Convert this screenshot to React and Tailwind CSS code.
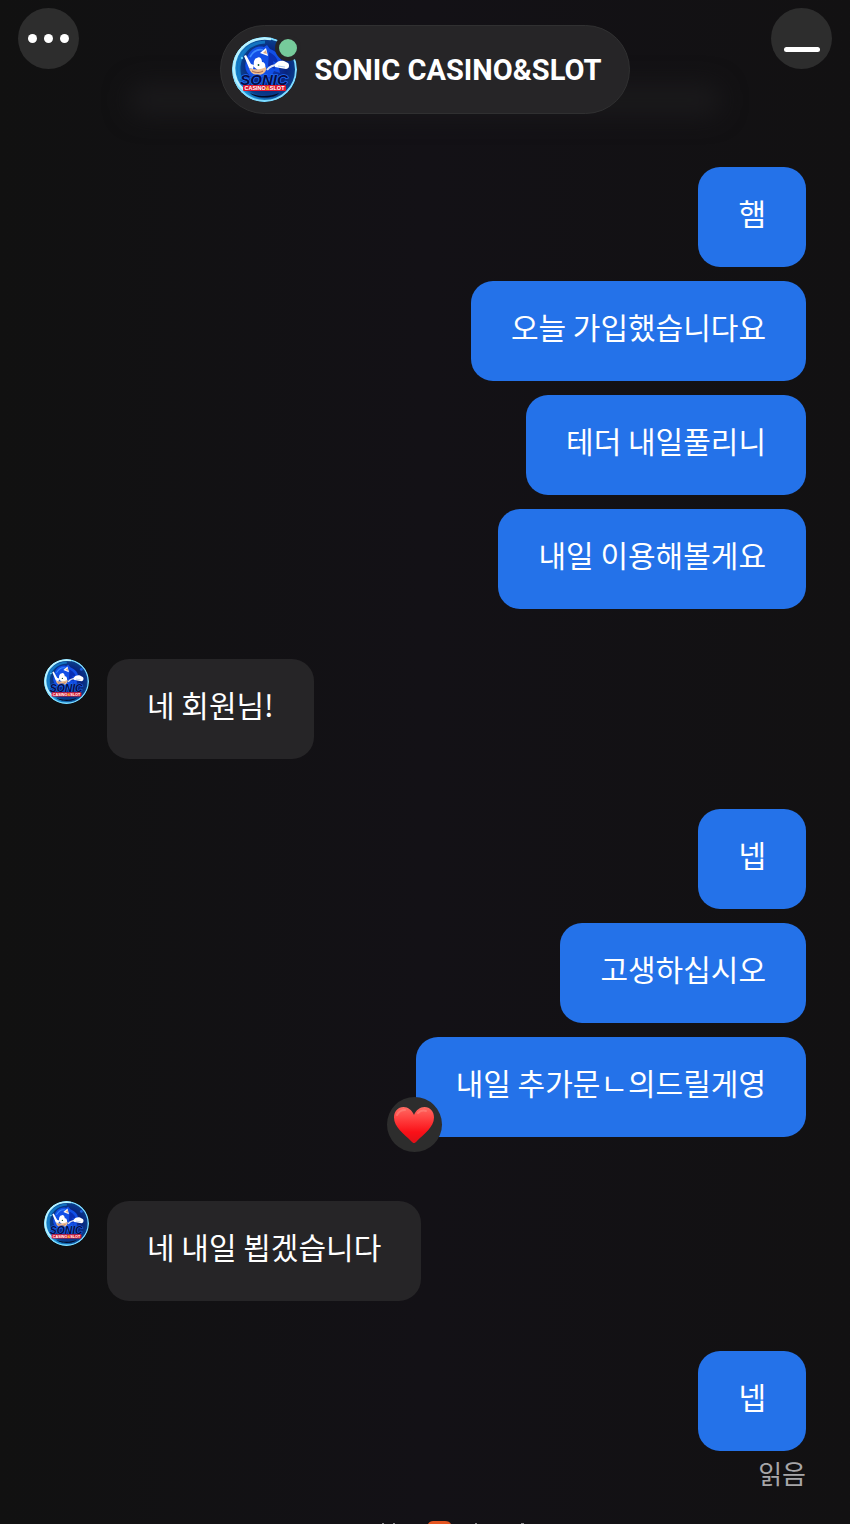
import { useId } from 'react';
import clsx from 'clsx';

const MESSAGE_GROUPS = [
  { id: 1, from: 'me', messages: [{ text: '햄' }, { text: '오늘 가입했습니다요' }, { text: '테더 내일풀리니' }, { text: '내일 이용해볼게요' }] },
  { id: 2, from: 'agent', messages: [{ text: '네 회원님!' }] },
  { id: 3, from: 'me', messages: [{ text: '넵' }, { text: '고생하십시오' }, { text: '내일 추가문ㄴ의드릴게영', liked: true }] },
  { id: 4, from: 'agent', messages: [{ text: '네 내일 뵙겠습니다' }] },
  { id: 5, from: 'me', messages: [{ text: '넵' }], read: true },
];

const Avatar = ({ className }) => {
  const id = useId();

  return (
    <svg viewBox="0 0 65 65" className={clsx('shrink-0', className)} role="img" aria-label="SONIC CASINO&SLOT">
      <defs>
        <radialGradient id={`${id}-bg`} cx="0.56" cy="0.48" r="0.56">
          <stop offset="0" stopColor="#0d3cc4" />
          <stop offset="0.5" stopColor="#08247e" />
          <stop offset="0.78" stopColor="#0a3f8c" />
          <stop offset="0.92" stopColor="#1f9be0" />
          <stop offset="1" stopColor="#b5f2ff" />
        </radialGradient>
        <clipPath id={`${id}-clip`}>
          <circle cx="32.5" cy="32.5" r="32.5" />
        </clipPath>
      </defs>
      <g clipPath={`url(#${id}-clip)`}>
        <circle cx="32.5" cy="32.5" r="32.5" fill={`url(#${id}-bg)`} />
        <circle cx="32.5" cy="32.5" r="31.5" fill="none" stroke="#7fdcff" strokeWidth="2" />
        <path d="M39 2C18-1 3 12 2 31c0 9 4 17 10 22" fill="none" stroke="#b9f2ff" strokeWidth="2.5" />
        <path d="M33 5C17 6 8 16 7 30c0 5 0 9 2 12" fill="none" stroke="#168bd9" strokeWidth="3" opacity="0.7" />
        <path d="M18 56c9 4 20 4 29 0-4 6-24 6-29 0Z" fill="#030b26" />
        <circle cx="54" cy="15" r="2" fill="#1d62df" />
        <circle cx="10" cy="21" r="1.2" fill="#65cdf5" />
        {/* Head and quills */}
        <path d="M14 24C16 13 24 8 32 10l3-2 3 4c8 3 12 9 12 17l-4-2 2 9-6-2-3 6H20c-6-4-8-9-6-16Z" fill="#124fe6" />
        <path d="M37 15c6 3 9 7 9 12l-5-3 2 8-7-3" fill="#0a2fb4" />
        <path d="M18 20c4-7 9-8 13-7" fill="none" stroke="#3c8aff" strokeWidth="1.6" />
        <path d="m28 16 6-5 2 8Z" fill="#fff" />
        <path d="m31 16 3-3 1 4Z" fill="#dba987" />
        {/* Face */}
        <path d="M22 30c-1-6 1-9 3-9 2-2 5 0 5 4 3 0 4 3 3 7l-6 2Z" fill="#fff" />
        <path d="M17 31c5 2 12 2 17-1 1 5-3 8-8 8-5 0-8-3-9-7Z" fill="#eebd91" />
        <path d="M20 34c4 2 8 2 11 0" fill="none" stroke="#8d4d3e" strokeWidth="0.8" />
        <circle cx="26.500" cy="28" r="0.9" fill="#0b572e" />
        {/* Gloves */}
        <path d="m12 19 2-1 5 9 3 1-1 4-4-1Z" fill="#fff" />
        <path d="M35 33c3-4 7-5 11-5" fill="none" stroke="#dfe4f2" strokeWidth="2" />
        <path d="M43 27c2-3 6-4 9-3l4 2c2 2 1 6-2 6l-6-1-5-1Z" fill="#fff" />
        <path d="m46 29 7 1" stroke="#9dbce9" strokeWidth="0.8" />
        {/* Wordmark */}
        <text
          x="32"
          y="48"
          textAnchor="middle"
          fontFamily="Liberation Sans, sans-serif"
          fontSize="15"
          fontWeight="700"
          fontStyle="italic"
          fill="#070b45"
          stroke="#1f6bf5"
          strokeWidth="1.6"
          paintOrder="stroke"
        >
          SONIC
        </text>
        <rect x="11" y="48" width="43" height="6" rx="1" fill="#dd1830" />
        <text x="32.5" y="53" textAnchor="middle" fontFamily="Liberation Sans, sans-serif" fontSize="5.5" fontWeight="700" fill="#fff">
          CASINO<tspan fill="#ffd437">&amp;</tspan>SLOT
        </text>
      </g>
    </svg>
  );
};

const HeartReaction = () => (
  <span className="absolute -bottom-[15px] -left-[29px] flex size-[55px] items-center justify-center rounded-full bg-[#2d2d2d]">
    <svg viewBox="0 0 40 36" className="w-10" role="img" aria-label="heart">
      <defs>
        <linearGradient id="heart-fill" x1="0" y1="0" x2="0" y2="1">
          <stop offset="0" stopColor="#ff6b63" />
          <stop offset="0.35" stopColor="#ff3d3d" />
          <stop offset="0.7" stopColor="#fa1018" />
          <stop offset="1" stopColor="#df1018" />
        </linearGradient>
      </defs>
      <path
        d="M20 8C18 3 14 0 9.500 0 4 0 0 4.500 0 10.500 0 20 10 27 17 34c1.500 1.500 2 2 3 2s1.500-.5 3-2c7-7 17-14 17-23.500C40 4.500 36 0 30.500 0 26 0 22 3 20 8Z"
        fill="url(#heart-fill)"
      />
      <path d="M3 8c2-4 5-5 8-5M24 6c2-2 5-3 8-2" fill="none" stroke="#ff9b91" strokeWidth="2" strokeLinecap="round" opacity="0.4" />
    </svg>
  </span>
);

const Bubble = ({ message, mine }) => (
  <div
    className={clsx(
      'relative rounded-[22px] px-10 pt-[23px] pb-[33px] text-[30px] leading-[44px] text-white',
      mine ? 'bg-[#2472e9]' : 'bg-[#262527]',
      message.liked && 'mb-3.5'
    )}
  >
    <p>{message.text}</p>
    {message.liked && <HeartReaction />}
  </div>
);

const MessageGroup = ({ group }) => {
  const mine = group.from === 'me';

  return (
    <section className={clsx('flex items-start gap-[18px]', mine && 'justify-end')}>
      {!mine && <Avatar className="size-[45px]" />}
      <div className={clsx('flex flex-col gap-3.5', mine ? 'items-end' : 'items-start')}>
        {group.messages.map((message) => (
          <Bubble key={message.text} message={message} mine={mine} />
        ))}
        {group.read && <span className="-mt-2.5 text-[26px] leading-9 text-[#a7a6a8]">읽음</span>}
      </div>
    </section>
  );
};

const ChatHeader = () => (
  <header className="relative flex items-start justify-between px-[18px] pt-2">
    <div className="absolute inset-x-32 top-[84px] h-8 rounded-full bg-[#1a191b] blur-md" />
    <button type="button" aria-label="Menu" className="flex size-[61px] items-center justify-center gap-[7px] rounded-full bg-[#2d2d2d]">
      <span className="size-[9px] rounded-full bg-white" />
      <span className="size-[9px] rounded-full bg-white" />
      <span className="size-[9px] rounded-full bg-white" />
    </button>
    <div className="relative mt-[17px] flex h-[89px] items-center gap-[18px] rounded-full border border-[#303031] bg-[#262527] pr-7 pl-[11px]">
      <div className="relative -mt-px">
        <Avatar className="size-[65px]" />
        <span className="absolute -top-0.5 -right-1 size-[26px] rounded-full border-4 border-[#262527] bg-[#76cb9b]" />
      </div>
      <h1 className="font-[Roboto,sans-serif] text-[29px] leading-9 font-bold whitespace-nowrap text-white">SONIC CASINO&amp;SLOT</h1>
    </div>
    <button type="button" aria-label="Minimize" className="flex size-[61px] items-end justify-center rounded-full bg-[#2d2d2d] pb-[17px]">
      <span className="h-[5px] w-9 rounded-sm bg-white" />
    </button>
  </header>
);

const App = () => (
  <div className="flex h-screen flex-col overflow-hidden bg-linear-to-r from-[#111111] via-[#131116] to-[#121112] font-['Noto_Sans_CJK_KR',sans-serif]">
    <ChatHeader />
    <main className="flex flex-1 flex-col gap-[50px] px-11 pt-[53px]">
      {MESSAGE_GROUPS.map((group) => (
        <MessageGroup key={group.id} group={group} />
      ))}
    </main>
    {/* Top edge of the branding line */}
    <footer className="flex h-[3px] justify-center">
      <svg viewBox="0 0 200 3" className="h-[3px] w-[200px]" aria-hidden="true">
        <path d="M103 3c1-2 3-3 5-3h12c3 0 5 1 6 3Z" fill="#e45521" />
        <path d="M57 2h2v1h-2ZM68 2h2v1h-2ZM150 2h2v1h-2ZM196 2h3v1h-3Z" fill="#8b8a8c" />
      </svg>
    </footer>
  </div>
);

export default App;
